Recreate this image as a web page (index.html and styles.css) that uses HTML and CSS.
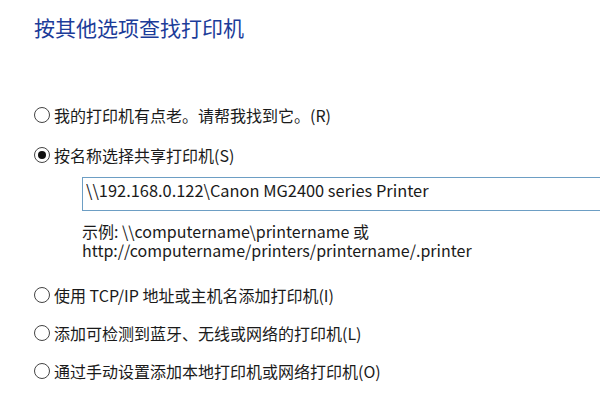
FILE: index.html
```html
<!DOCTYPE html>
<html lang="zh-CN">
<head>
  <meta charset="UTF-8">
  <title>添加打印机</title>
  <link rel="stylesheet" href="styles.css">
</head>
<body>

<div class="page">
  <h1 class="title">按其他选项查找打印机</h1>

  <div class="options">
    <label class="option"><span class="radio"></span>我的打印机有点老。请帮我找到它。(R)</label>

    <label class="option"><span class="radio checked"></span>按名称选择共享打印机(S)</label>
    <div class="share">
      <input class="path" type="text" value="\\192.168.0.122\Canon MG2400 series Printer">
      <p class="hint">示例: \\computername\printername 或<br>http://computername/printers/printername/.printer</p>
    </div>

    <label class="option"><span class="radio"></span>使用 TCP/IP 地址或主机名添加打印机(I)</label>
    <label class="option"><span class="radio"></span>添加可检测到蓝牙、无线或网络的打印机(L)</label>
    <label class="option"><span class="radio"></span>通过手动设置添加本地打印机或网络打印机(O)</label>
  </div>
</div>

</body>
</html>
```

FILE: styles.css
```css
body { margin: 0; background: #fff; overflow: hidden; font-family: "Noto Sans CJK SC", sans-serif; color: #1a1a1a; }
.page { padding: 13px 0 0 34px; width: 700px; }
.title { margin: 0; font-size: 21px; line-height: 28px; font-weight: normal; color: #1c3c99; }

.options { margin-top: 62px; display: flex; flex-direction: column; }
.option { display: flex; align-items: center; height: 24px; font-size: 16px; margin-bottom: 14px; }
.option:first-child { margin-bottom: 16px; }
.radio {
  width: 14px; height: 14px;
  border: 1px solid #444;
  border-radius: 50%;
  margin-right: 4px;
  display: flex; align-items: center; justify-content: center;
  flex: none;
}
.radio.checked::after { content: ""; width: 8px; height: 8px; border-radius: 50%; background: #111; }

.share { margin: -4px 0 23px 48px; }
.path {
  display: block;
  width: 560px; height: 34px;
  box-sizing: border-box;
  border: 1px solid #6d9ec4;
  padding: 0 3px 9px;
  font: 16.4px "Noto Sans CJK SC", sans-serif;
  color: #1a1a1a;
  outline: none;
}
.hint { margin: 11px 0 0; font-size: 16px; line-height: 19px; }
```
